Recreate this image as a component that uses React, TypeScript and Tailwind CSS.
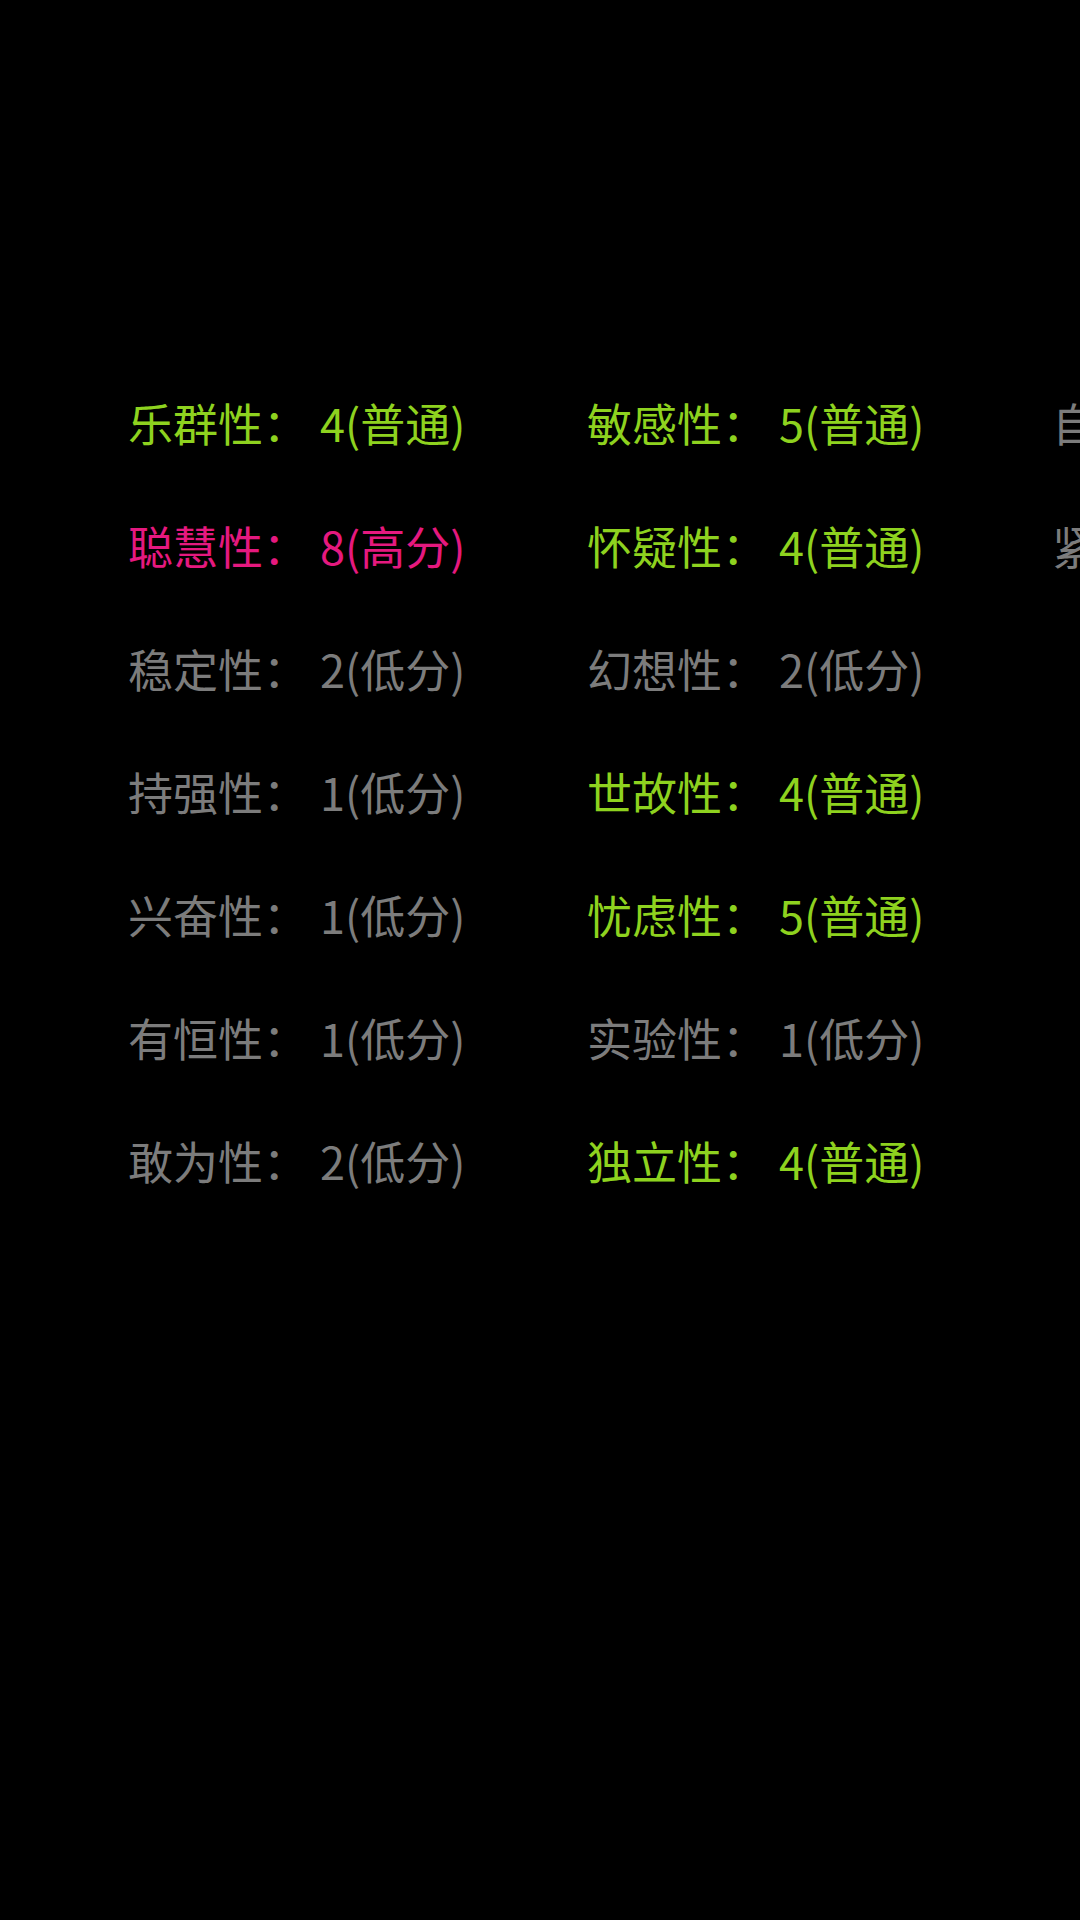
const levels = {
    high: "text-[#e5197f]",
    normal: "text-[#8ed21f]",
    low: "text-[#7c7c7c]",
};

type Level = keyof typeof levels;

const columns: { name: string; score: string; level: Level }[][] = [
    [
        { name: "乐群性", score: "4(普通)", level: "normal" },
        { name: "聪慧性", score: "8(高分)", level: "high" },
        { name: "稳定性", score: "2(低分)", level: "low" },
        { name: "持强性", score: "1(低分)", level: "low" },
        { name: "兴奋性", score: "1(低分)", level: "low" },
        { name: "有恒性", score: "1(低分)", level: "low" },
        { name: "敢为性", score: "2(低分)", level: "low" },
    ],
    [
        { name: "敏感性", score: "5(普通)", level: "normal" },
        { name: "怀疑性", score: "4(普通)", level: "normal" },
        { name: "幻想性", score: "2(低分)", level: "low" },
        { name: "世故性", score: "4(普通)", level: "normal" },
        { name: "忧虑性", score: "5(普通)", level: "normal" },
        { name: "实验性", score: "1(低分)", level: "low" },
        { name: "独立性", score: "4(普通)", level: "normal" },
    ],
    [
        { name: "自律性", score: "2(低分)", level: "low" },
        { name: "紧张性", score: "3(低分)", level: "low" },
    ],
];

// column widths: the third column runs off the right edge, as in a horizontal scroller
const widths = ["w-[459px]", "w-[465px]", "w-[462px]"];

export default function App() {
    return (
        <div
            className="w-[1080px] h-[1920px] bg-black overflow-hidden"
            style={{ fontFamily: '"Noto Sans CJK SC", "Noto Sans", sans-serif' }}
        >
            <div className="flex flex-row pt-[361px] pl-[128px]">
                {columns.map((col, i) => (
                    <div key={i} className={`${widths[i]} flex flex-col shrink-0`}>
                        {col.map(({ name, score, level }) => (
                            <div
                                key={name}
                                className={`${levels[level]} h-[123px] flex items-center text-[45px] whitespace-nowrap leading-none`}
                            >
                                <span>{name}：</span>
                                <span className="ml-[12px]">{score}</span>
                            </div>
                        ))}
                    </div>
                ))}
            </div>
        </div>
    );
}
